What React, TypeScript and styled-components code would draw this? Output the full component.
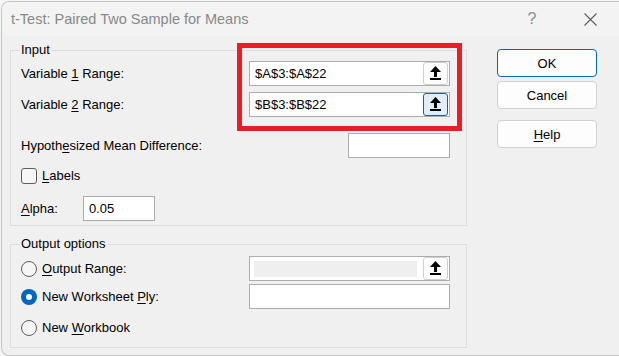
import React from "react";
import styled, { createGlobalStyle } from "styled-components";

const Global = createGlobalStyle`
  html, body { margin: 0; padding: 0; background: #f6f6f6; overflow: hidden; }
  body { font-family: "Liberation Sans", Arial, sans-serif; }
  * { box-sizing: border-box; }
`;

const Window = styled.div`
  position: relative;
  margin: 1px 0 0 1px;
  width: 618px;
  height: 355px;
  border: 1px solid #c4c4c4;
  border-right: none;
  border-radius: 8px 0 0 8px;
  background: #f0f0f0;
  overflow: hidden;
  color: #000;
  font-size: 13px;
`;

const TitleBar = styled.div`
  height: 34px;
  background: #f3f3f3;
  display: flex;
  align-items: center;
  padding-left: 9px;
`;

const Title = styled.div`
  font-size: 14.5px;
  color: #888888;
  flex: 1;
`;

const TitleGlyph = styled.div`
  width: 30px;
  display: flex;
  justify-content: center;
  color: #8c8c8c;
  font-size: 16px;
  margin-right: 37px;
`;

const CloseBox = styled.div`
  width: 13px;
  margin-right: 22px;
  display: flex;
`;

const Body = styled.div`
  position: relative;
  display: flex;
  padding: 6px 0 0 8px;
`;

const LeftColumn = styled.div`
  width: 457px;
  display: flex;
  flex-direction: column;
  gap: 10px;
`;

const Group = styled.fieldset<{ $pb: number }>`
  margin: 0;
  border: 1px solid #dcdcdc;
  padding: 0 16px ${(p) => p.$pb}px 10px;
  display: flex;
  flex-direction: column;
  min-width: 0;
`;

const Legend = styled.legend`
  padding: 0 2px;
  margin-left: -2px;
  line-height: 16px;
  font-size: 13px;
`;

const Row = styled.div<{ $mt: number; $h?: number }>`
  display: flex;
  align-items: center;
  height: ${(p) => p.$h ?? 25}px;
  margin-top: ${(p) => p.$mt}px;
`;

const Label = styled.span`
  white-space: nowrap;
`;

const U = styled.span`
  text-decoration: underline;
  text-underline-offset: 2px;
`;

const Field = styled.div<{ $w: number; $ml?: number }>`
  width: ${(p) => p.$w}px;
  height: 25px;
  margin-left: ${(p) => (p.$ml === undefined ? "auto" : `${p.$ml}px`)};
  border: 1px solid #adadad;
  background: #fff;
  display: flex;
  align-items: center;
  padding: 0 1px 0 5px;
`;

const FieldText = styled.span`
  flex: 1;
  white-space: nowrap;
`;

const DisabledFill = styled.div`
  flex: 1;
  height: 16px;
  background: #efefef;
  margin-right: 6px;
  margin-left: -1px;
`;

const PickButton = styled.div<{ $active?: boolean }>`
  width: 25px;
  height: 23px;
  border-radius: 3px;
  border: 1px solid ${(p) => (p.$active ? "#0067c0" : "#cfcfcf")};
  background: ${(p) => (p.$active ? "#e1edf8" : "#fdfdfd")};
  display: flex;
  align-items: center;
  justify-content: center;
`;

const Check = styled.div`
  width: 16px;
  height: 16px;
  border: 1px solid #5e5e5e;
  border-radius: 3px;
  background: #f6f6f6;
  margin-right: 5px;
`;

const Radio = styled.div<{ $on?: boolean }>`
  width: 16px;
  height: 16px;
  border-radius: 50%;
  border: ${(p) => (p.$on ? "none" : "1px solid #5e5e5e")};
  background: ${(p) => (p.$on ? "#0067c0" : "#f6f6f6")};
  margin-right: 5px;
  display: flex;
  align-items: center;
  justify-content: center;
  &::after {
    content: "";
    display: ${(p) => (p.$on ? "block" : "none")};
    width: 6px;
    height: 6px;
    border-radius: 50%;
    background: #fff;
  }
`;

const ButtonColumn = styled.div`
  margin: 7px 0 0 30px;
  width: 100px;
  display: flex;
  flex-direction: column;
`;

const Button = styled.div<{ $primary?: boolean; $mt: number }>`
  height: 28px;
  margin-top: ${(p) => p.$mt}px;
  border-radius: 4px;
  border: 1px solid ${(p) => (p.$primary ? "#0067c0" : "#d0d0d0")};
  background: #fdfdfd;
  display: flex;
  align-items: center;
  justify-content: center;
`;

const Highlight = styled.div`
  position: absolute;
  left: 235px;
  top: 7px;
  width: 225px;
  height: 88px;
  border: 5px solid #ec1c24;
  pointer-events: none;
`;

const UpArrow = () => (
  <svg width="11" height="15" viewBox="0 0 11 15">
    <polygon points="5.5,0 11,6 7,6 7,11 4,11 4,6 0,6" fill="#000" />
    <rect x="0" y="12" width="11" height="2" fill="#000" />
  </svg>
);

const CloseIcon = () => (
  <svg width="13" height="13" viewBox="0 0 13 13">
    <path d="M0.5 0.5 L12.5 12.5 M12.5 0.5 L0.5 12.5" stroke="#5c5c5c" strokeWidth="1.1" />
  </svg>
);

export default function App() {
  return (
    <>
      <Global />
      <Window>
        <TitleBar>
          <Title>t-Test: Paired Two Sample for Means</Title>
          <TitleGlyph>?</TitleGlyph>
          <CloseBox>
            <CloseIcon />
          </CloseBox>
        </TitleBar>
        <Body>
          <LeftColumn>
            <Group $pb={4}>
              <Legend>Input</Legend>
              <Row $mt={3}>
                <Label>
                  Variable <U>1</U> Range:
                </Label>
                <Field $w={201}>
                  <FieldText>$A$3:$A$22</FieldText>
                  <PickButton>
                    <UpArrow />
                  </PickButton>
                </Field>
              </Row>
              <Row $mt={6}>
                <Label>
                  Variable <U>2</U> Range:
                </Label>
                <Field $w={201}>
                  <FieldText>$B$3:$B$22</FieldText>
                  <PickButton $active>
                    <UpArrow />
                  </PickButton>
                </Field>
              </Row>
              <Row $mt={16}>
                <Label>
                  Hypoth<U>e</U>sized Mean Difference:
                </Label>
                <Field $w={102} />
              </Row>
              <Row $mt={5}>
                <Check />
                <Label>
                  <U>L</U>abels
                </Label>
              </Row>
              <Row $mt={8}>
                <Label>
                  <U>A</U>lpha:
                </Label>
                <Field $w={72} $ml={25}>
                  <FieldText>0.05</FieldText>
                </Field>
              </Row>
            </Group>
            <Group $pb={7}>
              <Legend>Output options</Legend>
              <Row $mt={4}>
                <Radio />
                <Label>
                  <U>O</U>utput Range:
                </Label>
                <Field $w={201}>
                  <DisabledFill />
                  <PickButton>
                    <UpArrow />
                  </PickButton>
                </Field>
              </Row>
              <Row $mt={3}>
                <Radio $on />
                <Label>
                  New Worksheet <U>P</U>ly:
                </Label>
                <Field $w={201} />
              </Row>
              <Row $mt={6}>
                <Radio />
                <Label>
                  New <U>W</U>orkbook
                </Label>
              </Row>
            </Group>
          </LeftColumn>
          <ButtonColumn>
            <Button $primary $mt={0}>OK</Button>
            <Button $mt={4}>Cancel</Button>
            <Button $mt={11}>
              <span>
                <U>H</U>elp
              </span>
            </Button>
          </ButtonColumn>
          <Highlight />
        </Body>
      </Window>
    </>
  );
}
